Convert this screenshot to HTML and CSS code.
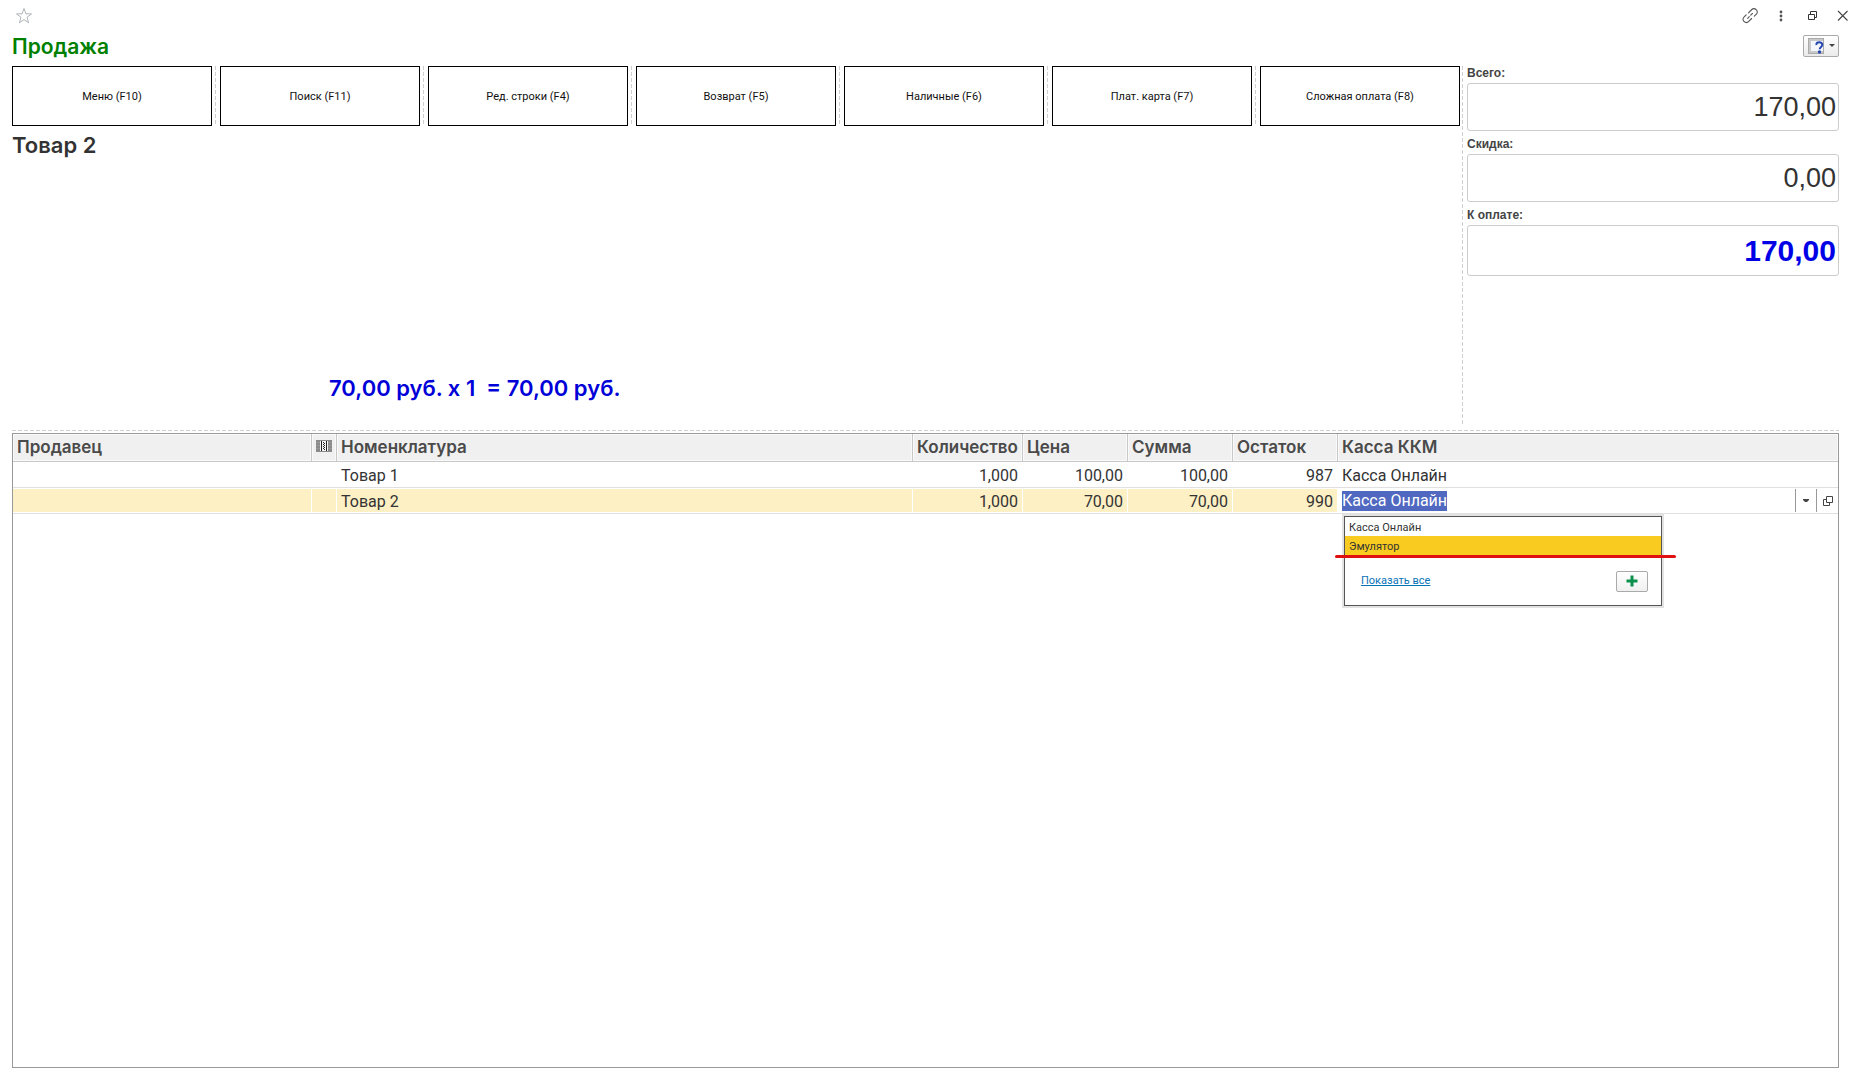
FILE: index.html
```html
<!DOCTYPE html>
<html lang="ru">
<head>
<meta charset="utf-8">
<title>Продажа</title>
<link rel="stylesheet" href="styles.css">
</head>
<body>
<header class="topbar">
  <button class="icon-btn" type="button" aria-label="Избранное">
    <svg width="18" height="18" viewBox="0 0 18 18" fill="none" stroke="#b0b3b8" stroke-width="1"><path d="M9 1.5l1.9 5.3 5.6.1-4.5 3.4 1.6 5.5L9 12.600l-4.600 3.200 1.600-5.500L1.500 6.900l5.600-.1z"/></svg>
  </button>
  <span class="spacer"></span>
  <button class="icon-btn" type="button" aria-label="Ссылка">
    <svg width="18" height="18" viewBox="0 0 18 18" fill="none" stroke="#555" stroke-width="1.100" stroke-linecap="round"><path d="M7.500 5.800l3.300-3.300a2.900 2.900 0 0 1 4.200 0l.4.400a2.900 2.900 0 0 1 0 4.200L13.300 9.200M10.600 11.500l-3.100 3.200a2.900 2.900 0 0 1-4.200 0l-.4-.4a2.900 2.900 0 0 1 0-4.200L5.200 7.800M6.700 11.300l1.600-1.600M9.700 8.200l1.700-1.700"/></svg>
  </button>
  <button class="icon-btn" type="button" aria-label="Ещё">
    <svg width="16" height="16" viewBox="0 0 16 16" fill="#555"><circle cx="8" cy="4" r="1.400"/><circle cx="8" cy="8" r="1.400"/><circle cx="8" cy="12" r="1.400"/></svg>
  </button>
  <button class="icon-btn" type="button" aria-label="Свернуть в окно">
    <svg width="16" height="16" viewBox="0 0 16 16" fill="none" stroke="#333" stroke-width="1"><path d="M4.500 6.500h6v5h-6zM6.500 6V3.500h6v6H11"/></svg>
  </button>
  <button class="icon-btn" type="button" aria-label="Закрыть">
    <svg width="16" height="16" viewBox="0 0 16 16" fill="none" stroke="#444" stroke-width="1.100"><path d="M3 3l9.500 9.500M12.500 3L3 12.500"/></svg>
  </button>
</header>

<main class="form">
  <div class="title-row">
    <h1 class="title">Продажа</h1>
    <button class="help-btn" type="button" aria-label="Справка">
      <svg width="16" height="16" viewBox="0 0 16 16"><rect x=".5" y=".5" width="15" height="15" fill="#c9c9c9" stroke="#aaa"/><rect x="3" y="3" width="12" height="10" fill="#f4f7fc"/><path d="M8.500 7C8 5 9.500 4.300 11.200 4.300c2 0 3.100 1 3.100 2.500 0 2.200-2.500 2.200-2.600 4.400" fill="none" stroke="#2748b0" stroke-width="2"/><circle cx="11.500" cy="14" r="1.700" fill="#2748b0"/></svg>
      <svg width="6" height="4" viewBox="0 0 6 4"><path d="M0 0h6L3 3z" fill="#444"/></svg>
    </button>
  </div>

  <div class="upper">
    <section class="left">
      <div class="commands">
        <button type="button">Меню (F10)</button>
        <i class="vline"></i>
        <button type="button">Поиск (F11)</button>
        <i class="vline"></i>
        <button type="button">Ред. строки (F4)</button>
        <i class="vline"></i>
        <button type="button">Возврат (F5)</button>
        <i class="vline"></i>
        <button type="button">Наличные (F6)</button>
        <i class="vline"></i>
        <button type="button">Плат. карта (F7)</button>
        <i class="vline"></i>
        <button type="button">Сложная оплата (F8)</button>
      </div>
      <p class="product">Товар 2</p>
      <p class="calc">70,00 руб. x 1&nbsp; = 70,00 руб.</p>
    </section>
    <i class="vline"></i>
    <section class="totals">
      <label for="total">Всего:</label>
      <input id="total" type="text" value="170,00" readonly>
      <label for="discount">Скидка:</label>
      <input id="discount" type="text" value="0,00" readonly>
      <label for="due">К оплате:</label>
      <input id="due" class="due" type="text" value="170,00" readonly>
    </section>
  </div>

  <i class="hline"></i>

  <div class="grid">
    <table>
      <colgroup><col class="c-seller"><col class="c-mark"><col class="c-item"><col class="c-qty"><col class="c-num"><col class="c-num"><col class="c-num"><col></colgroup>
      <thead>
        <tr>
          <th>Продавец</th>
          <th class="mark"><svg width="16" height="12" viewBox="0 0 16 12"><path d="M0 0h16v12H0z" fill="#8a8a8a"/><path d="M0 2.500h4M0 5.500h4M0 8.500h4M12 2.500h4M12 5.500h4M12 8.500h4" stroke="#999"/><path d="M4 1h8v10H4z" fill="#f4f4f4"/><path d="M5 1h1v10H5zM10 1h1v10h-1z" fill="#222"/><path d="M7 2h1v1H7zM8 3h1v1H8zM7 4h1v1H7zM8 5h1v1H8zM7 6h1v1H7zM8 7h1v1H8zM7 8h1v1H7zM8 9h1v1H8z" fill="#222"/></svg></th>
          <th>Номенклатура</th>
          <th>Количество</th>
          <th>Цена</th>
          <th>Сумма</th>
          <th>Остаток</th>
          <th>Касса ККМ</th>
        </tr>
      </thead>
      <tbody>
        <tr>
          <td></td><td></td><td>Товар 1</td>
          <td class="num">1,000</td><td class="num">100,00</td><td class="num">100,00</td><td class="num">987</td>
          <td>Касса Онлайн</td>
        </tr>
        <tr class="current">
          <td></td><td></td><td>Товар 2</td>
          <td class="num">1,000</td><td class="num">70,00</td><td class="num">70,00</td><td class="num">990</td>
          <td class="edit">
            <div class="editor">
              <input id="kkm" type="text" value="Касса Онлайн" aria-label="Касса ККМ">
              <button type="button" aria-label="Выбрать из списка"><svg width="6" height="4" viewBox="0 0 6 4"><path d="M0 0h6v1L4 3H2L0 1z" fill="#444"/></svg></button>
              <button type="button" aria-label="Открыть"><svg width="10" height="10" viewBox="0 0 10 10" fill="none" stroke="#444"><path d="M3.500.5h6v6h-6zM3 3.500H.500v6h6V7"/></svg></button>
            </div>
            <div class="popup">
              <ul>
                <li>Касса Онлайн</li>
                <li class="active">Эмулятор</li>
              </ul>
              <div class="popup-foot">
                <a href="#">Показать все</a>
                <button type="button" aria-label="Создать"><svg width="12" height="12" viewBox="0 0 12 12"><path d="M4.500 0.500h3v4h4v3h-4v4h-3v-4h-4v-3h4z" fill="#0b8f4d"/></svg></button>
              </div>
              <i class="underline"></i>
            </div>
          </td>
        </tr>
      </tbody>
    </table>
  </div>
</main>
<script src="app.js"></script>
</body>
</html>
```
FILE: app.js
```js
const field = document.getElementById('kkm');
field.focus();
field.select();
```
FILE: styles.css
```css
* { box-sizing: border-box; }
body {
  margin: 0;
  min-height: 100vh;
  display: flex;
  flex-direction: column;
  background: #fff;
  color: #333;
  font: 11px/16px Roboto, "Liberation Sans", sans-serif;
}
h1, p, ul { margin: 0; padding: 0; }
button { font: inherit; color: inherit; padding: 0; cursor: pointer; }
input { font: inherit; color: inherit; outline: 0; }

.topbar { display: flex; gap: 3px; height: 32px; padding-left: 10px; }
.spacer { flex: 1; }
.icon-btn {
  width: 28px;
  height: 31px;
  display: flex;
  align-items: center;
  justify-content: center;
  border: 0;
  background: none;
}

.form { flex: 1; display: flex; flex-direction: column; padding: 0 18px 11px 12px; }
.title-row { display: flex; justify-content: space-between; align-items: center; height: 34px; padding-bottom: 6px; }
.title { color: #008000; font: 600 21px/28px Inter, Arial, sans-serif; padding-top: 1px; }
.help-btn {
  display: flex;
  align-items: center;
  justify-content: center;
  gap: 5px;
  width: 36px;
  height: 22px;
  border: 1px solid #aaa;
  border-radius: 2px;
  background: linear-gradient(#fff, #ebebeb);
}

.upper { display: flex; height: 358px; }
.left { flex: 1; display: flex; flex-direction: column; }
.commands { display: flex; gap: 3px; height: 60px; }
.commands button { flex: 1; border: 1px solid #000; background: #fff; color: #111; padding-top: 1px; }
.vline { flex: none; width: 1px; background: repeating-linear-gradient(#d0d0d0 0 4px, transparent 4px 6px); }
.commands .vline { width: 2px; background-size: 1px 100%; background-repeat: no-repeat; }
.upper > .vline { margin: 0 4px 0 2px; }
.product { font: 600 22px/28px Inter, Arial, sans-serif; padding-top: 5px; }
.calc { margin-top: auto; padding: 0 0 22px 317px; color: #0000d8; font: 600 22px/28px Inter, Arial, sans-serif; }

.totals { flex: none; width: 372px; display: flex; flex-direction: column; }
.totals label { font: bold 12px/14px "Liberation Sans", Arial, sans-serif; color: #444; height: 23px; }
.totals label:first-child { height: 17px; }
.totals label:not(:first-child) { padding-top: 6px; }
.totals input {
  height: 48px;
  padding: 1px 2px 0;
  border: 1px solid #ccc;
  border-radius: 3px;
  text-align: right;
  font: 27px/32px "Liberation Sans", Arial, sans-serif;
}
.totals .due { height: 51px; font-size: 30px; font-weight: bold; color: #0000e6; }

.hline { height: 1px; margin: 6px 0 2px; background: repeating-linear-gradient(90deg, #d0d0d0 0 4px, transparent 4px 6px); }

.grid { flex: 1; border: 1px solid #999; }
table { width: 100%; table-layout: fixed; border-collapse: separate; border-spacing: 0; }
.c-seller { width: 299px; }
.c-mark { width: 25px; }
.c-item { width: 576px; }
.c-qty { width: 110px; }
.c-num { width: 105px; }
th, td { padding: 0 4px; text-align: left; white-space: nowrap; line-height: 20px; }
th {
  height: 28px;
  padding-bottom: 1px;
  border-right: 1px solid #c8c8c8;
  border-bottom: 1px solid #c8c8c8;
  background: #f0f0f0;
  box-shadow: inset 0 0 0 1px #fafafa;
  color: #4a4a4a;
  font: 600 17px/20px Inter, Arial, sans-serif;
}
th:last-child { border-right: 0; }
th.mark { padding: 0 0 4px; text-align: center; line-height: 12px; }
td { height: 26px; padding-top: 2px; border-bottom: 1px solid #e0e0e0; font-size: 16px; }
.num { text-align: right; padding-right: 5px; }
.current td { background: #fdf0c4; box-shadow: inset -1px 1px #fff, inset 0 -1px #fff; }
.current .edit { position: relative; padding: 0; background: #fff; }
.editor { display: flex; height: 23px; }
.editor input { flex: 1; min-width: 0; border: 0; padding: 1px 4px 0; background: none; line-height: 20px; }
.editor input::selection { background: #5068c0; color: #fff; }
.editor button { width: 21px; border: 0; border-left: 1px solid #999; background: none; display: flex; align-items: center; justify-content: center; }
.editor button:last-child { width: 22px; }

.popup {
  position: absolute;
  top: 28px;
  left: 6px;
  width: 318px;
  border: 1px solid #555;
  background: #fff;
  box-shadow: 0 0 0 2px #e2e2e2;
  font-size: 11px;
}
.popup ul { list-style: none; }
.popup li { height: 19px; padding: 1px 4px 0; line-height: 20px; }
.popup .active { background: #f9cb20; height: 20px; }
.popup-foot { display: flex; align-items: center; justify-content: space-between; height: 49px; padding: 1px 13px 0 16px; }
.popup a { color: #0a73b7; }
.popup button {
  width: 32px;
  height: 21px;
  display: flex;
  align-items: center;
  justify-content: center;
  border: 1px solid #aaa;
  border-radius: 2px;
  background: linear-gradient(#fff, #f0f0f0);
}
.underline { position: absolute; top: 38px; left: -10px; width: 341px; height: 3px; border-radius: 2px; background: #e01010; }
```
